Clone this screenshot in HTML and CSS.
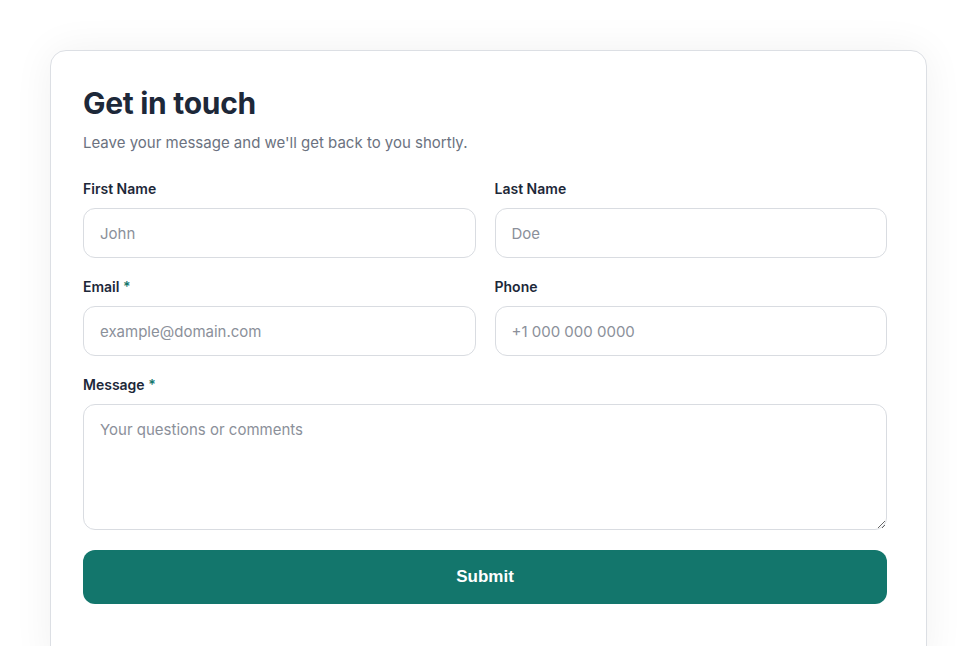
FILE: index.html
```html
<!DOCTYPE html>
<html lang="en">
<head>
  <meta charset="UTF-8">
  <title>Contact</title>
  <link rel="stylesheet" href="styles.css">
</head>
<body>
  <main class="card">
    <h1>Get in touch</h1>
    <p class="lead">Leave your message and we'll get back to you shortly.</p>

    <form class="contact-form" onsubmit="return false">
      <div class="field">
        <label for="firstName">First Name</label>
        <input type="text" id="firstName" placeholder="John">
      </div>
      <div class="field">
        <label for="lastName">Last Name</label>
        <input type="text" id="lastName" placeholder="Doe">
      </div>
      <div class="field">
        <label for="email">Email <span class="req">*</span></label>
        <input type="email" id="email" placeholder="example@domain.com">
      </div>
      <div class="field">
        <label for="phone">Phone</label>
        <input type="tel" id="phone" placeholder="+1 000 000 0000">
      </div>
      <div class="field wide">
        <label for="message">Message <span class="req">*</span></label>
        <textarea id="message" placeholder="Your questions or comments"></textarea>
      </div>
      <button type="submit" class="submit-btn wide">Submit</button>
    </form>
  </main>
</body>
</html>
```

FILE: styles.css
```css
* {
  margin: 0;
  padding: 0;
  box-sizing: border-box;
}

body {
  font-family: 'Inter', 'Lato', sans-serif;
  background: #fff;
  color: #1e2937;
  padding: 50px 0 0 50px;
  height: 100vh;
  overflow: hidden;
}

.card {
  width: 877px;
  min-height: 620px;
  padding: 38px 39px 40px 32px;
  border: 1px solid #dcdfe4;
  border-radius: 16px;
  background: #fff;
  box-shadow: 0 0 40px rgba(0, 0, 0, 0.06);
}

h1 {
  font-size: 30px;
  font-weight: 700;
  line-height: 28px;
  letter-spacing: -0.3px;
  color: #1d2839;
}

.lead {
  margin-top: 15px;
  font-size: 15px;
  line-height: 22px;
  color: #6b7280;
}

.contact-form {
  margin-top: 26px;
  display: grid;
  grid-template-columns: 1fr 1fr;
  column-gap: 19px;
  row-gap: 20px;
}

.field {
  display: flex;
  flex-direction: column;
  gap: 10px;
}

.wide {
  grid-column: 1 / -1;
}

label {
  font-size: 14px;
  font-weight: 600;
  line-height: 18px;
  color: #1d2839;
}

.req {
  color: #13766c;
}

input, textarea {
  width: 100%;
  border: 1px solid #d9dce1;
  border-radius: 12px;
  background: #fff;
  font-family: inherit;
  font-size: 15px;
  color: #1e2937;
  padding: 0 16px;
  outline: none;
}

input {
  height: 50px;
}

textarea {
  height: 126px;
  padding-top: 15px;
  line-height: 20px;
}

::placeholder {
  color: #8b909a;
}

.submit-btn {
  height: 54px;
  border: none;
  border-radius: 12px;
  background: #13766c;
  color: #fff;
  font-family: 'Liberation Sans', Arial, sans-serif;
  font-size: 17px;
  font-weight: 700;
  cursor: pointer;
}
```
